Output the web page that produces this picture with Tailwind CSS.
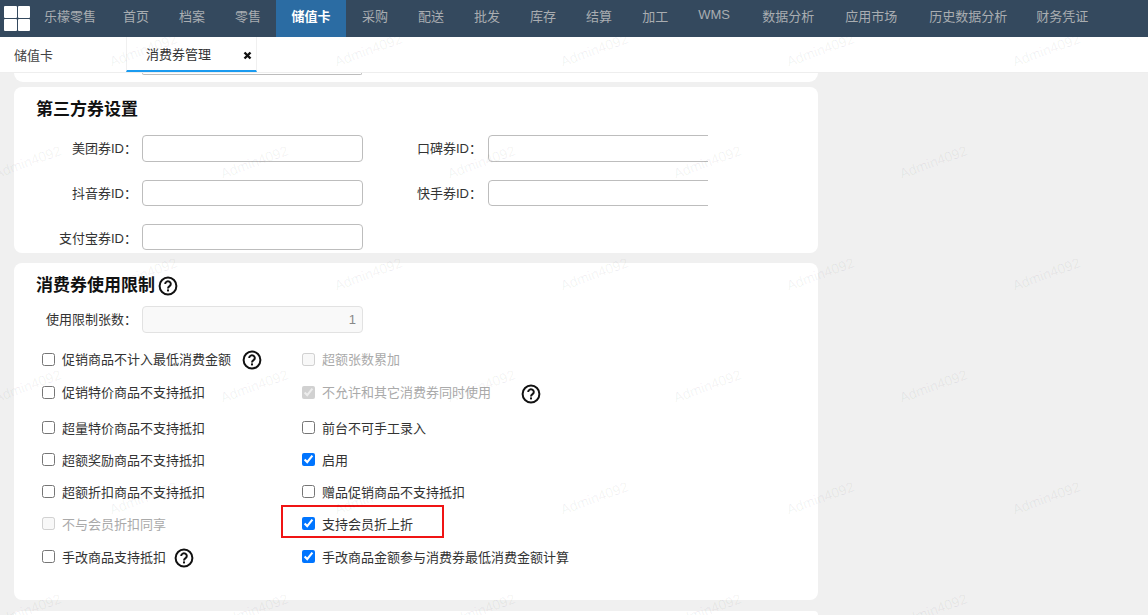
<!DOCTYPE html>
<html lang="zh-CN">
  <head>
    <meta charset="UTF-8">
    <title>消费券管理</title>
    <script src="https://cdn.jsdelivr.net/npm/@tailwindcss/browser@4"></script>
  </head>
  <body class="relative h-[615px] overflow-hidden bg-[#f0f0f0] font-['Liberation_Sans','Noto_Sans_CJK_SC',sans-serif] text-[13px] text-[#333]">

    <header class="relative z-20 flex h-[37px] items-center bg-[#34495e] text-[#a9adb1]">
      <div class="ml-[4px] grid w-[26px] grid-cols-2 gap-[1px]">
        <span class="h-[12px] rounded-[1px] bg-white"></span>
        <span class="h-[12px] rounded-[1px] bg-white"></span>
        <span class="h-[12px] rounded-[1px] bg-white"></span>
        <span class="h-[12px] rounded-[1px] bg-white"></span>
      </div>
      <span class="ml-[14px] w-[64px] pb-[3px]">乐檬零售</span>
      <a class="px-[15px] pb-[3px]">首页</a>
      <a class="px-[15px] pb-[3px]">档案</a>
      <a class="px-[15px] pb-[3px]">零售</a>
      <a class="flex h-full w-[70px] items-center justify-center bg-[#2b6ca3] pb-[3px] font-bold text-white">储值卡</a>
      <a class="ml-px px-[15px] pb-[3px]">采购</a>
      <a class="px-[15px] pb-[3px]">配送</a>
      <a class="px-[15px] pb-[3px]">批发</a>
      <a class="px-[15px] pb-[3px]">库存</a>
      <a class="px-[15px] pb-[3px]">结算</a>
      <a class="px-[15px] pb-[3px]">加工</a>
      <a class="w-[64px] pb-[7px] pl-[15px]">WMS</a>
      <a class="pl-[15px] pr-[16px] pb-[3px]">数据分析</a>
      <a class="pl-[15px] pr-[17px] pb-[3px]">应用市场</a>
      <a class="pl-[15px] pr-[14px] pb-[3px]">历史数据分析</a>
      <a class="px-[15px] pb-[3px]">财务凭证</a>
    </header>

    <div class="relative z-0 flex h-[36px] border-b border-[#eeeeee] bg-white">
      <span class="w-[126px] pl-[14px] pt-[9px] text-[#444]">储值卡</span>
      <div class="flex h-[35px] w-[131px] items-center justify-between border-x border-[#f0f0f0] border-b-2 border-b-[#1a9bf0] pl-[19px] pr-[4px]">
        <span class="mt-[2px] text-[#333]">消费券管理</span>
        <svg class="mt-[4px] h-[9px] w-[9px]" viewBox="0 0 9 9"><path d="M1.5 1.5l6 6M7.5 1.5l-6 6" stroke="#111" stroke-width="2.4" fill="none"/></svg>
      </div>
    </div>

    <main class="w-[804px] ml-[14px]">
      <div class="relative h-[9px] overflow-hidden rounded-b-[10px] bg-white">
        <div class="ml-[128px] h-[2px] w-[220px] rounded-b border-x border-b border-[#bdbdbd]"></div>
      </div>

      <section class="mt-[5px] h-[166px] rounded-[8px] bg-white pt-[14px]">
        <h2 class="ml-[22px] text-[17px] font-bold leading-[18px] text-[#111]">第三方券设置</h2>
        <div class="mt-[16px] flex items-center">
          <label class="w-[123px] text-right">美团券ID：</label>
          <input class="ml-[5px] h-[27px] w-[221px] rounded-[4px] border border-[#bdbdbd]">
          <label class="w-[119px] text-right">口碑券ID：</label>
          <div class="ml-[6px] w-[220px] overflow-hidden"><input class="block h-[27px] w-[226px] rounded-[4px] border border-[#bdbdbd]"></div>
        </div>
        <div class="mt-[18px] flex items-center">
          <label class="mt-px w-[123px] text-right">抖音券ID：</label>
          <input class="ml-[5px] h-[26px] w-[221px] rounded-[4px] border border-[#bdbdbd]">
          <label class="mt-px w-[119px] text-right">快手券ID：</label>
          <div class="ml-[6px] w-[220px] overflow-hidden"><input class="block h-[26px] w-[226px] rounded-[4px] border border-[#bdbdbd]"></div>
        </div>
        <div class="mt-[18px] flex items-center">
          <label class="mt-[3px] w-[123px] text-right">支付宝券ID：</label>
          <input class="ml-[5px] h-[26px] w-[221px] rounded-[4px] border border-[#bdbdbd]">
        </div>
      </section>

      <section class="mt-[10px] h-[337px] rounded-[8px] bg-white pt-[13px]">
        <h2 class="ml-[22px] flex items-center gap-[3px] text-[17px] font-bold leading-[18px] text-[#111]">
          消费券使用限制
          <svg class="h-[20px] w-[20px]" viewBox="0 0 20 20"><circle cx="10" cy="10" r="8.4" fill="none" stroke="#111" stroke-width="2"/><path d="M7.2 8a2.8 2.6 0 1 1 4.4 2.1c-1 .7-1.6 1.1-1.6 2.3" fill="none" stroke="#111" stroke-width="2"/><rect x="9" y="13.4" width="2" height="2" fill="#111"/></svg>
        </h2>
        <div class="mt-[10px] flex items-center">
          <label class="w-[123px] text-right">使用限制张数：</label>
          <input class="ml-[5px] h-[27px] w-[221px] rounded-[4px] border border-[#e2e2e2] bg-[#f9f9f9] px-[6px] text-right text-[#888]" value="1" disabled>
        </div>

        <div class="mt-[11px] pl-[28px]">
          <div class="flex h-8 items-center">
            <label class="flex w-[260px] items-center gap-[7px]"><input type="checkbox" class="h-[13px] w-[13px] -translate-y-px">促销商品不计入最低消费金额
              <svg class="ml-[4px] h-[20px] w-[20px]" viewBox="0 0 20 20"><circle cx="10" cy="10" r="8.4" fill="none" stroke="#111" stroke-width="2"/><path d="M7.2 8a2.8 2.6 0 1 1 4.4 2.1c-1 .7-1.6 1.1-1.6 2.3" fill="none" stroke="#111" stroke-width="2"/><rect x="9" y="13.4" width="2" height="2" fill="#111"/></svg>
            </label>
            <label class="flex items-center gap-[7px] text-[#aaa]"><input type="checkbox" class="h-[13px] w-[13px] -translate-y-px" disabled>超额张数累加</label>
          </div>
          <div class="mt-[1px] flex h-8 items-center">
            <label class="flex w-[260px] items-center gap-[7px]"><input type="checkbox" class="h-[13px] w-[13px] -translate-y-px">促销特价商品不支持抵扣</label>
            <label class="flex items-center gap-[7px] text-[#aaa]"><input type="checkbox" class="h-[13px] w-[13px] -translate-y-px" checked disabled>不允许和其它消费券同时使用
              <svg class="ml-[23px] mt-px h-[20px] w-[20px]" viewBox="0 0 20 20"><circle cx="10" cy="10" r="8.4" fill="none" stroke="#111" stroke-width="2"/><path d="M7.2 8a2.8 2.6 0 1 1 4.4 2.1c-1 .7-1.6 1.1-1.6 2.3" fill="none" stroke="#111" stroke-width="2"/><rect x="9" y="13.4" width="2" height="2" fill="#111"/></svg>
            </label>
          </div>
          <div class="mt-[4px] flex h-8 items-center">
            <label class="flex w-[260px] items-center gap-[7px]"><input type="checkbox" class="h-[13px] w-[13px] -translate-y-[2px]">超量特价商品不支持抵扣</label>
            <label class="flex items-center gap-[7px]"><input type="checkbox" class="h-[13px] w-[13px] -translate-y-[2px]">前台不可手工录入</label>
          </div>
          <div class="flex h-8 items-center">
            <label class="flex w-[260px] items-center gap-[7px]"><input type="checkbox" class="h-[13px] w-[13px] -translate-y-[2px]">超额奖励商品不支持抵扣</label>
            <label class="flex items-center gap-[7px]"><input type="checkbox" class="h-[13px] w-[13px] -translate-y-[2px]" checked>启用</label>
          </div>
          <div class="flex h-8 items-center">
            <label class="flex w-[260px] items-center gap-[7px]"><input type="checkbox" class="h-[13px] w-[13px] -translate-y-[2px]">超额折扣商品不支持抵扣</label>
            <label class="flex items-center gap-[7px]"><input type="checkbox" class="h-[13px] w-[13px] -translate-y-[2px]">赠品促销商品不支持抵扣</label>
          </div>
          <div class="flex h-8 items-center">
            <label class="flex w-[260px] items-center gap-[7px] text-[#aaa]"><input type="checkbox" class="h-[13px] w-[13px] -translate-y-[2px]" disabled>不与会员折扣同享</label>
            <label class="flex items-center gap-[7px]"><input type="checkbox" class="h-[13px] w-[13px] -translate-y-[2px]" checked>支持会员折上折</label>
          </div>
          <div class="mt-px flex h-8 items-center">
            <label class="flex w-[260px] items-center gap-[7px]"><input type="checkbox" class="h-[13px] w-[13px] -translate-y-[2px]">手改商品支持抵扣
              <svg class="ml-[1px] h-[20px] w-[20px]" viewBox="0 0 20 20"><circle cx="10" cy="10" r="8.4" fill="none" stroke="#111" stroke-width="2"/><path d="M7.2 8a2.8 2.6 0 1 1 4.4 2.1c-1 .7-1.6 1.1-1.6 2.3" fill="none" stroke="#111" stroke-width="2"/><rect x="9" y="13.4" width="2" height="2" fill="#111"/></svg>
            </label>
            <label class="flex items-center gap-[7px]"><input type="checkbox" class="h-[13px] w-[13px] -translate-y-[2px]" checked>手改商品金额参与消费券最低消费金额计算</label>
          </div>
        </div>
      </section>

      <section class="mt-[11px] h-[4px] rounded-t-[8px] bg-white"></section>
    </main>

    <!-- annotation box -->
    <div class="absolute left-[281px] top-[505px] z-10 h-[33px] w-[163px] border-2 border-[#f01414]"></div>

    <!-- watermark -->
    <div class="pointer-events-none absolute inset-0 z-10 overflow-hidden text-[14px] text-black/[0.06]">
      <span class="absolute left-[108px] top-[40px] -rotate-[20deg]">Admin4092</span>
      <span class="absolute left-[333px] top-[40px] -rotate-[20deg]">Admin4092</span>
      <span class="absolute left-[559px] top-[40px] -rotate-[20deg]">Admin4092</span>
      <span class="absolute left-[785px] top-[40px] -rotate-[20deg]">Admin4092</span>
      <span class="absolute left-[1011px] top-[40px] -rotate-[20deg]">Admin4092</span>
      <span class="absolute left-[-8px] top-[152px] -rotate-[20deg]">Admin4092</span>
      <span class="absolute left-[219px] top-[152px] -rotate-[20deg]">Admin4092</span>
      <span class="absolute left-[446px] top-[152px] -rotate-[20deg]">Admin4092</span>
      <span class="absolute left-[672px] top-[152px] -rotate-[20deg]">Admin4092</span>
      <span class="absolute left-[898px] top-[152px] -rotate-[20deg]">Admin4092</span>
      <span class="absolute left-[108px] top-[264px] -rotate-[20deg]">Admin4092</span>
      <span class="absolute left-[333px] top-[264px] -rotate-[20deg]">Admin4092</span>
      <span class="absolute left-[559px] top-[264px] -rotate-[20deg]">Admin4092</span>
      <span class="absolute left-[785px] top-[264px] -rotate-[20deg]">Admin4092</span>
      <span class="absolute left-[1011px] top-[264px] -rotate-[20deg]">Admin4092</span>
      <span class="absolute left-[-8px] top-[376px] -rotate-[20deg]">Admin4092</span>
      <span class="absolute left-[219px] top-[376px] -rotate-[20deg]">Admin4092</span>
      <span class="absolute left-[446px] top-[376px] -rotate-[20deg]">Admin4092</span>
      <span class="absolute left-[672px] top-[376px] -rotate-[20deg]">Admin4092</span>
      <span class="absolute left-[898px] top-[376px] -rotate-[20deg]">Admin4092</span>
      <span class="absolute left-[108px] top-[488px] -rotate-[20deg]">Admin4092</span>
      <span class="absolute left-[333px] top-[488px] -rotate-[20deg]">Admin4092</span>
      <span class="absolute left-[559px] top-[488px] -rotate-[20deg]">Admin4092</span>
      <span class="absolute left-[785px] top-[488px] -rotate-[20deg]">Admin4092</span>
      <span class="absolute left-[1011px] top-[488px] -rotate-[20deg]">Admin4092</span>
      <span class="absolute left-[-8px] top-[600px] -rotate-[20deg]">Admin4092</span>
      <span class="absolute left-[219px] top-[600px] -rotate-[20deg]">Admin4092</span>
      <span class="absolute left-[446px] top-[600px] -rotate-[20deg]">Admin4092</span>
      <span class="absolute left-[672px] top-[600px] -rotate-[20deg]">Admin4092</span>
      <span class="absolute left-[898px] top-[600px] -rotate-[20deg]">Admin4092</span>
    </div>
  </body>
</html>
